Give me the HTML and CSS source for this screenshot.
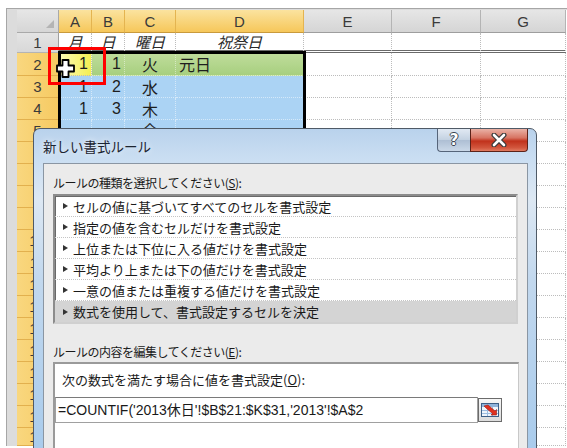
FILE: index.html
```html
<!DOCTYPE html>
<html lang="ja">
<head>
<meta charset="utf-8">
<title>新しい書式ルール</title>
<link rel="stylesheet" href="styles.css">
</head>
<body>
<div class="app">
  <div class="sheet">
    <div class="grid">
      <div class="corner"><span class="tri"></span></div>
      <div class="ch sel">A</div><div class="ch sel">B</div><div class="ch sel">C</div><div class="ch sel">D</div>
      <div class="ch">E</div><div class="ch">F</div><div class="ch">G</div>

      <div class="rh gray">1</div>
      <div class="c r1 it">月</div><div class="c r1 it">日</div><div class="c r1 it">曜日</div><div class="c r1 it">祝祭日</div>
      <div class="c r1"></div><div class="c r1"></div><div class="c r1"></div>

      <div class="rh">2</div>
      <div class="c active num">1</div><div class="c green num">1</div><div class="c green mid">火</div><div class="c green left">元日</div>
      <div class="c"></div><div class="c"></div><div class="c"></div>

      <div class="rh">3</div>
      <div class="c blue num">1</div><div class="c blue num">2</div><div class="c blue mid">水</div><div class="c blue"></div>
      <div class="c"></div><div class="c"></div><div class="c"></div>

      <div class="rh">4</div>
      <div class="c blue num">1</div><div class="c blue num">3</div><div class="c blue mid">木</div><div class="c blue"></div>
      <div class="c"></div><div class="c"></div><div class="c"></div>

      <div class="rh">5</div>
      <div class="c blue"></div><div class="c blue"></div><div class="c blue mid low">金</div><div class="c blue"></div>
      <div class="c"></div><div class="c"></div><div class="c"></div>

      <div class="rh">6</div><div class="c blue"></div><div class="c blue"></div><div class="c blue"></div><div class="c blue"></div><div class="c"></div><div class="c"></div><div class="c"></div>
      <div class="rh">7</div><div class="c blue"></div><div class="c blue"></div><div class="c blue"></div><div class="c blue"></div><div class="c"></div><div class="c"></div><div class="c"></div>
      <div class="rh">8</div><div class="c blue"></div><div class="c blue"></div><div class="c blue"></div><div class="c blue"></div><div class="c"></div><div class="c"></div><div class="c"></div>
      <div class="rh">9</div><div class="c blue"></div><div class="c blue"></div><div class="c blue"></div><div class="c blue"></div><div class="c"></div><div class="c"></div><div class="c"></div>
      <div class="rh">10</div><div class="c blue"></div><div class="c blue"></div><div class="c blue"></div><div class="c blue"></div><div class="c"></div><div class="c"></div><div class="c"></div>
      <div class="rh">11</div><div class="c blue"></div><div class="c blue"></div><div class="c blue"></div><div class="c blue"></div><div class="c"></div><div class="c"></div><div class="c"></div>
      <div class="rh">12</div><div class="c blue"></div><div class="c blue"></div><div class="c blue"></div><div class="c blue"></div><div class="c"></div><div class="c"></div><div class="c"></div>
      <div class="rh">13</div><div class="c blue"></div><div class="c blue"></div><div class="c blue"></div><div class="c blue"></div><div class="c"></div><div class="c"></div><div class="c"></div>
      <div class="rh">14</div><div class="c blue"></div><div class="c blue"></div><div class="c blue"></div><div class="c blue"></div><div class="c"></div><div class="c"></div><div class="c"></div>
      <div class="rh">15</div><div class="c blue"></div><div class="c blue"></div><div class="c blue"></div><div class="c blue"></div><div class="c"></div><div class="c"></div><div class="c"></div>
      <div class="rh">16</div><div class="c blue"></div><div class="c blue"></div><div class="c blue"></div><div class="c blue"></div><div class="c"></div><div class="c"></div><div class="c"></div>
      <div class="rh">17</div><div class="c blue"></div><div class="c blue"></div><div class="c blue"></div><div class="c blue"></div><div class="c"></div><div class="c"></div><div class="c"></div>
      <div class="rh">18</div><div class="c blue"></div><div class="c blue"></div><div class="c blue"></div><div class="c blue"></div><div class="c"></div><div class="c"></div><div class="c"></div>
      <div class="rh">19</div><div class="c blue"></div><div class="c blue"></div><div class="c blue"></div><div class="c blue"></div><div class="c"></div><div class="c"></div><div class="c"></div>
    </div>
  </div>

  <div class="selection"></div>
  <div class="redbox"></div>
  <svg class="cursor" width="19" height="19" viewBox="0 0 19 19">
    <polygon points="6.5,1 12.5,1 12.5,6.5 18,6.5 18,12.5 12.5,12.5 12.5,18 6.5,18 6.5,12.5 1,12.5 1,6.5 6.5,6.5" fill="#fff" stroke="#000" stroke-width="1.8" stroke-linejoin="round"/>
  </svg>

  <div class="dialog">
    <div class="titlebar">
      <span class="title">新しい書式ルール</span>
      <div class="caps">
        <div class="cap help">?</div>
        <div class="cap close">
          <svg width="20" height="14" viewBox="0 0 20 14">
            <path d="M5 2 L15 12 M15 2 L5 12" stroke="#3a3a3a" stroke-width="5" stroke-linecap="round"/>
            <path d="M5 2 L15 12 M15 2 L5 12" stroke="#fff" stroke-width="2.6" stroke-linecap="round"/>
          </svg>
        </div>
      </div>
    </div>
    <div class="content">
      <div class="label">ルールの種類を選択してください(<u>S</u>):</div>
      <div class="list">
        <div class="item"><span class="arrow"></span>セルの値に基づいてすべてのセルを書式設定</div>
        <div class="item"><span class="arrow"></span>指定の値を含むセルだけを書式設定</div>
        <div class="item"><span class="arrow"></span>上位または下位に入る値だけを書式設定</div>
        <div class="item"><span class="arrow"></span>平均より上または下の値だけを書式設定</div>
        <div class="item"><span class="arrow"></span>一意の値または重複する値だけを書式設定</div>
        <div class="item selected"><span class="arrow"></span>数式を使用して、書式設定するセルを決定</div>
      </div>
      <div class="label label2">ルールの内容を編集してください(<u>E</u>):</div>
      <div class="box">
        <div class="boxlabel">次の数式を満たす場合に値を書式設定(<u>O</u>):</div>
        <div class="inputrow">
          <div class="input">=COUNTIF('2013休日'!$B$21:$K$31,'2013'!$A$2</div>
          <div class="refbtn">
            <svg width="20" height="18" viewBox="0 0 20 18">
              <rect x="1.5" y="2.5" width="17" height="13" fill="#eef4fb" stroke="#3d5f86"/>
              <rect x="2" y="3" width="16" height="3" fill="#8fb3da"/>
              <path d="M2 9.5 H18 M2 12.5 H18 M7.5 6 V15 M12.5 6 V15" stroke="#9cbde0" stroke-width="1"/>
              <polygon points="4,5 8,4 15,10 16.5,8.5 16.5,14 11,14 12.5,12.5 6,7" fill="#e0301e" stroke="#9a1a10" stroke-width="0.6"/>
            </svg>
          </div>
        </div>
      </div>
    </div>
  </div>
</div>
</body>
</html>
```

FILE: styles.css
```css
* { box-sizing: border-box; }
html, body { margin: 0; padding: 0; }
body {
  width: 567px;
  height: 448px;
  overflow: hidden;
  background: #fff;
  font-family: "Liberation Sans", "Noto Sans CJK JP", sans-serif;
  color: #1e1e1e;
}
.app { position: relative; width: 567px; height: 448px; overflow: hidden; }

.sheet {
  margin: 8px 0 0 6px;
  border-top: 1px solid #a6a6a6;
  border-left: 1px solid #a6a6a6;
  padding: 1px 0 0 10px;
  background: #dcdcdc;
}
.grid {
  display: grid;
  grid-template-columns: 42px 33px 33px 51px 128px 88px 89px 85px;
  grid-template-rows: 23px 20px 23px 22px 22px repeat(14, 22px);
  background: #fff;
}
.corner {
  position: relative;
  background: linear-gradient(#e6e6e6, #d6d6d6);
  border-right: 1px solid #a9a9a9;
  border-bottom: 1px solid #a9a9a9;
}
.tri {
  position: absolute;
  right: 4px;
  bottom: 4px;
  width: 0; height: 0;
  border-left: 8px solid transparent;
  border-bottom: 8px solid #b4b4b4;
}
.ch {
  display: flex;
  align-items: center;
  justify-content: center;
  font-size: 15px;
  color: #3a3a3a;
  background: linear-gradient(#e6e6e6, #d5d5d5);
  border-right: 1px solid #b4b4b4;
  border-bottom: 1px solid #9e9e9e;
}
.ch.sel {
  background: linear-gradient(#fbe39f, #f6c75a);
  border-right-color: #e4b450;
  border-bottom-color: #c99a3c;
}
.rh {
  display: flex;
  align-items: center;
  justify-content: center;
  font-size: 15px;
  color: #3a3a3a;
  background: linear-gradient(to right, #f9d77f, #f6ca62);
  border-right: 1px solid #c99a3c;
  border-bottom: 1px solid #e2b04e;
}
.rh.gray {
  background: linear-gradient(#e4e4e4, #d8d8d8);
  border-right-color: #9e9e9e;
  border-bottom-color: #b4b4b4;
}
.c {
  display: flex;
  align-items: center;
  font-family: "Liberation Sans", "Noto Sans CJK JP", sans-serif;
  font-size: 16px;
  color: #1e1e1e;
  border-right: 1px dotted #bcbcbc;
  border-bottom: 1px dotted #bcbcbc;
  padding: 0 3px;
}
.c.r1 {
  border-bottom: 3px double #6a6a6a;
  justify-content: center;
}
.c.it { font-style: italic; font-size: 15px; color: #2a2a2a; }
.c.num { justify-content: flex-end; }
.c.mid { justify-content: center; }
.c.left { justify-content: flex-start; }
.c.low { align-items: flex-end; line-height: 18px; }
.c.active { background: linear-gradient(to right, #fbfbb8, #f4ef52); }
.c.green {
  background: linear-gradient(#c0dd9c, #a7cf7f);
  border-right-color: rgba(255,255,255,0.45);
  border-bottom-color: rgba(255,255,255,0.45);
}
.c.blue {
  background: #abd3f4;
  border-right-color: rgba(255,255,255,0.5);
  border-bottom-color: rgba(255,255,255,0.5);
}

.selection {
  position: absolute;
  left: 58px;
  top: 51px;
  width: 248px;
  height: 400px;
  border: 3px solid #000;
  border-bottom: none;
}
.redbox {
  position: absolute;
  left: 48px;
  top: 47px;
  width: 58px;
  height: 38px;
  border: 3px solid #ff0000;
}
.cursor {
  position: absolute;
  left: 56px;
  top: 59px;
}

.dialog {
  position: absolute;
  left: 33px;
  top: 128px;
  width: 504px;
  height: 330px;
  border: 1px solid #4f5a66;
  border-radius: 7px 7px 0 0;
  background: linear-gradient(#b9d2ec 0, #cadef2 30px, #dde8f3 70px, #c2d8ee 150px, #a8cbec 100%);
  font-family: "Noto Sans CJK JP", sans-serif;
  color: #1a1a1a;
  display: flex;
  flex-direction: column;
}
.titlebar {
  height: 34px;
  flex: none;
  display: flex;
  align-items: flex-start;
  padding-left: 9px;
}
.title {
  margin-top: 8px;
  font-size: 13.5px;
  line-height: 18px;
  color: #1c2430;
  text-shadow: 0 0 6px rgba(255,255,255,0.9);
}
.caps {
  margin-left: auto;
  margin-right: 8px;
  display: flex;
}
.cap {
  height: 23px;
  display: flex;
  align-items: center;
  justify-content: center;
}
.help {
  width: 33px;
  border: 1px solid #56657a;
  border-top: none;
  border-right: none;
  border-radius: 0 0 0 4px;
  background: linear-gradient(#e1e9f3, #c4d2e2 48%, #aebfd4 52%, #cad8e8);
  font-family: "DejaVu Sans", sans-serif;
  font-weight: bold;
  font-size: 15px;
  color: #fff;
  text-shadow: -1px 0 #3b4552, 1px 0 #3b4552, 0 -1px #3b4552, 0 1px #3b4552;
}
.close {
  width: 58px;
  border: 1px solid #5c2218;
  border-top: none;
  border-radius: 0 0 4px 0;
  background: linear-gradient(#eab2a6, #d77462 40%, #c1321c 55%, #d2563d 85%, #e07a60);
}

.content {
  flex: 1;
  margin: 0 8px 0 9px;
  background: #ebebeb;
  border: 1px solid #8a96a3;
  border-bottom: none;
  padding: 11px 9px 0 9px;
}
.label {
  font-size: 12px;
  letter-spacing: -0.5px;
  line-height: 16px;
  white-space: nowrap;
}
.label u, .boxlabel u { text-underline-offset: 1px; }
.list {
  margin-top: 3px;
  width: 465px;
  background: #fff;
  border: 2px solid #8c8c8c;
  border-right-color: #d0d0d0;
  border-bottom-color: #d0d0d0;
  box-shadow: inset 1px 1px 0 #696969;
}
.item {
  height: 21px;
  display: flex;
  align-items: center;
  padding-left: 8px;
  font-size: 13px;
  white-space: nowrap;
  border-bottom: 1px dotted #c4c4c4;
}
.item:last-child { border-bottom: none; }
.item.selected { background: #d4d4d4; }
.arrow {
  width: 0; height: 0;
  border-left: 5px solid #333;
  border-top: 3px solid transparent;
  border-bottom: 3px solid transparent;
  margin-right: 5px;
}
.label2 { margin-top: 20px; }
.box {
  margin-top: 2px;
  width: 466px;
  height: 100px;
  background: #fff;
  border-top: 2px solid #9a9a9a;
  border-left: 2px solid #9a9a9a;
  border-right: 1px solid #c8c8c8;
  padding-top: 8px;
}
.boxlabel {
  margin-left: 7px;
  font-size: 13px;
  line-height: 16px;
  white-space: nowrap;
}
.inputrow {
  margin-top: 9px;
  display: flex;
  align-items: flex-start;
}
.input {
  width: 423px;
  height: 26px;
  border: 1px solid #a0a0a0;
  border-top-color: #7a7a7a;
  background: #fff;
  font-family: "Liberation Sans", "Noto Sans CJK JP", sans-serif;
  font-size: 14px;
  line-height: 24px;
  padding-left: 2px;
  white-space: nowrap;
  overflow: hidden;
}
.refbtn {
  margin-top: 1px;
  width: 24px;
  height: 24px;
  border: 1px solid #6b6b6b;
  background: linear-gradient(#f6f6f6, #dcdcdc);
  display: flex;
  align-items: center;
  justify-content: center;
}
```
